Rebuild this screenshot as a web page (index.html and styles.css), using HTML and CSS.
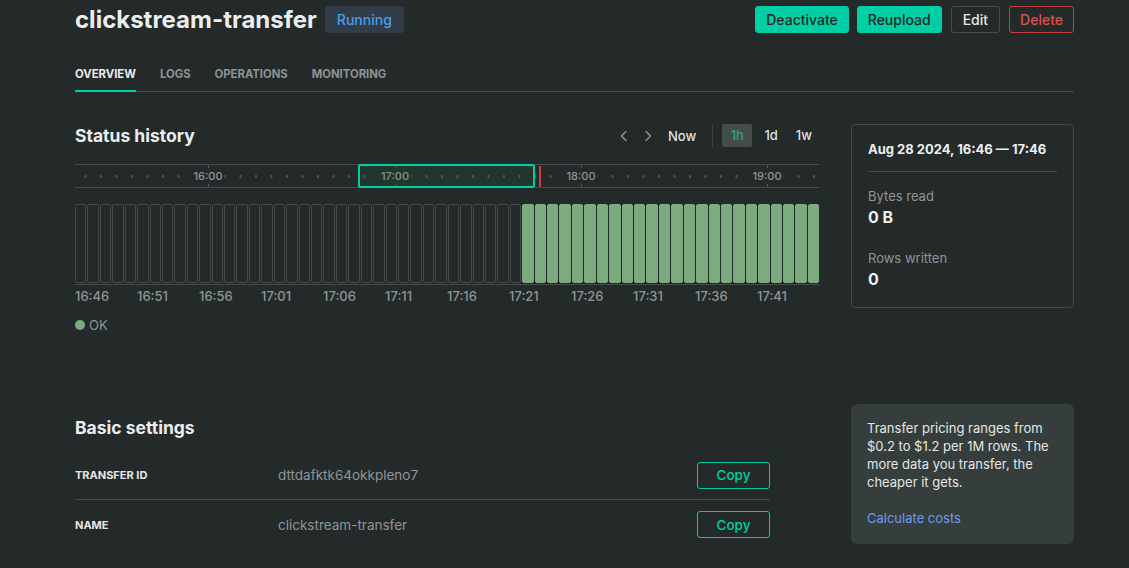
FILE: index.html
```html
<!DOCTYPE html>
<html lang="en">
<head>
<meta charset="utf-8">
<title>clickstream-transfer</title>
<link rel="stylesheet" href="styles.css">
</head>
<body>
<div class="page">
  <header class="header">
    <div class="title-wrap">
      <h1 class="title">clickstream-transfer</h1>
      <span class="badge">Running</span>
    </div>
    <div class="actions">
      <button class="btn btn-primary btn-deact">Deactivate</button>
      <button class="btn btn-primary btn-reup">Reupload</button>
      <button class="btn btn-outline">Edit</button>
      <button class="btn btn-danger">Delete</button>
    </div>
  </header>

  <nav class="tabs">
    <span class="tab active">Overview</span>
    <span class="tab">Logs</span>
    <span class="tab">Operations</span>
    <span class="tab">Monitoring</span>
  </nav>

  <section class="status">
    <div class="status-main">
      <div class="status-head">
        <h2 class="h2">Status history</h2>
        <div class="range-nav">
          <span class="chev"><svg width="10" height="12" viewBox="0 0 10 12"><path d="M7 1.5 L2.5 6 L7 10.5" fill="none" stroke="#8e9594" stroke-width="1.5" stroke-linecap="round" stroke-linejoin="round"/></svg></span>
          <span class="chev"><svg width="10" height="12" viewBox="0 0 10 12"><path d="M3 1.5 L7.5 6 L3 10.5" fill="none" stroke="#8e9594" stroke-width="1.5" stroke-linecap="round" stroke-linejoin="round"/></svg></span>
          <span class="now">Now</span>
          <span class="vsep"></span>
          <span class="rng active">1h</span>
          <span class="rng">1d</span>
          <span class="rng">1w</span>
        </div>
      </div>

      <div class="timeline">
        <span class="major" style="left:133px"></span>
        <span class="major" style="left:320px"></span>
        <span class="major" style="left:506px"></span>
        <span class="major" style="left:692px"></span>
        <span class="tl-label" style="left:133px">16:00</span>
        <span class="tl-label" style="left:320px">17:00</span>
        <span class="tl-label" style="left:506px">18:00</span>
        <span class="tl-label" style="left:692px">19:00</span>
        <span class="selection"></span>
        <span class="nowline"></span>
      </div>

      <div class="bars">
        <span class="bar"></span><span class="bar"></span><span class="bar"></span><span class="bar"></span><span class="bar"></span><span class="bar"></span>
        <span class="bar"></span><span class="bar"></span><span class="bar"></span><span class="bar"></span><span class="bar"></span><span class="bar"></span>
        <span class="bar"></span><span class="bar"></span><span class="bar"></span><span class="bar"></span><span class="bar"></span><span class="bar"></span>
        <span class="bar"></span><span class="bar"></span><span class="bar"></span><span class="bar"></span><span class="bar"></span><span class="bar"></span>
        <span class="bar"></span><span class="bar"></span><span class="bar"></span><span class="bar"></span><span class="bar"></span><span class="bar"></span>
        <span class="bar"></span><span class="bar"></span><span class="bar"></span><span class="bar"></span><span class="bar"></span><span class="bar"></span>
        <span class="bar ok"></span><span class="bar ok"></span><span class="bar ok"></span><span class="bar ok"></span><span class="bar ok"></span><span class="bar ok"></span>
        <span class="bar ok"></span><span class="bar ok"></span><span class="bar ok"></span><span class="bar ok"></span><span class="bar ok"></span><span class="bar ok"></span>
        <span class="bar ok"></span><span class="bar ok"></span><span class="bar ok"></span><span class="bar ok"></span><span class="bar ok"></span><span class="bar ok"></span>
        <span class="bar ok"></span><span class="bar ok"></span><span class="bar ok"></span><span class="bar ok"></span><span class="bar ok"></span><span class="bar ok"></span>
      </div>
      <div class="bar-labels">
        <span>16:46</span><span>16:51</span><span>16:56</span><span>17:01</span><span>17:06</span><span>17:11</span>
        <span>17:16</span><span>17:21</span><span>17:26</span><span>17:31</span><span>17:36</span><span>17:41</span>
      </div>
      <div class="legend"><span class="dot"></span>OK</div>
    </div>

    <aside class="stats">
      <div class="stats-date">Aug 28 2024, 16:46 — 17:46</div>
      <div class="stat">
        <div class="stat-label">Bytes read</div>
        <div class="stat-value">0 B</div>
      </div>
      <div class="stat">
        <div class="stat-label">Rows written</div>
        <div class="stat-value">0</div>
      </div>
    </aside>
  </section>

  <section class="settings">
    <div class="settings-main">
      <h2 class="h2">Basic settings</h2>
      <div class="rows">
        <div class="row">
          <span class="row-label">Transfer ID</span>
          <span class="row-value">dttdafktk64okkpleno7</span>
          <button class="btn-copy">Copy</button>
        </div>
        <div class="row">
          <span class="row-label">Name</span>
          <span class="row-value">clickstream-transfer</span>
          <button class="btn-copy">Copy</button>
        </div>
      </div>
    </div>
    <aside class="pricing">
      <p>Transfer pricing ranges from $0.2 to $1.2 per 1M rows. The more data you transfer, the cheaper it gets.</p>
      <a class="link">Calculate costs</a>
    </aside>
  </section>
</div>
</body>
</html>
```

FILE: styles.css
```css
* { box-sizing: border-box; }
html, body { margin: 0; padding: 0; }
body {
  background: #242a2a;
  color: #e6e8e8;
  font-family: Inter, "Noto Sans", "DejaVu Sans", sans-serif;
  font-size: 13px;
  height: 568px;
  overflow: hidden;
}
.page {
  width: 999px;
  margin-left: 75px;
  padding-top: 6px;
}
.header {
  display: flex;
  justify-content: space-between;
  align-items: center;
  height: 27px;
}
.title-wrap { display: flex; align-items: center; gap: 8px; }
.title {
  margin: 0;
  font-size: 24px;
  font-weight: 700;
  line-height: 27px;
  color: #eceeee;
}
.badge {
  background: #313c48;
  color: #4a9cf0;
  font-size: 14px;
  font-weight: 500;
  height: 27px;
  line-height: 27px;
  padding: 0 12px;
  border-radius: 3px;
}
.actions { display: flex; gap: 8px; }
.btn {
  font-family: inherit;
  font-size: 14px;
  font-weight: 500;
  height: 27px;
  padding: 0 12px;
  border-radius: 3px;
  border: 1px solid transparent;
  cursor: pointer;
}
.btn-primary { background: #00cfa5; color: #1e2b27; border-color: #00cfa5; }
.btn-deact { padding: 0 10px; }
.btn-reup { padding: 0 10px; }
.btn-outline { background: transparent; color: #e6e8e8; border-color: #474e4d; padding: 0 11px; margin-left: 1px; }
.btn-danger { background: transparent; color: #d9514c; border-color: #c9413e; padding: 0 10px; margin-left: 1px; }

.tabs {
  display: flex;
  gap: 24px;
  margin-top: 31px;
  border-bottom: 1px solid #434a49;
}
.tab {
  text-transform: uppercase;
  font-size: 11.3px;
  font-weight: 700;
  color: #8d9392;
  line-height: 20px;
  padding-bottom: 6px;
  margin-bottom: -1px;
  border-bottom: 2px solid transparent;
}
.tab.active { color: #e9ebeb; border-bottom-color: #00cfa5; }

.status {
  display: flex;
  justify-content: space-between;
  margin-top: 32px;
}
.status-main { width: 744px; }
.status-head {
  display: flex;
  justify-content: space-between;
  align-items: center;
  height: 23px;
}
.h2 {
  margin: 0;
  font-size: 17.5px;
  font-weight: 700;
  color: #eceeee;
}
.range-nav { display: flex; align-items: center; height: 23px; }
.chev { width: 12px; display: flex; justify-content: center; margin-right: 12px; }
.chev + .chev { margin-right: 14px; }
.now { color: #dfe2e1; font-size: 13px; font-weight: 500; }
.vsep { width: 1px; height: 24px; background: #3c4443; margin: 0 9px 0 16px; }
.rng {
  font-size: 13px;
  font-weight: 500;
  color: #dfe2e1;
  height: 23px;
  line-height: 23px;
  margin-right: 18px;
}
.rng:last-child { margin-right: 7px; }
.rng.active {
  background: #434d4b;
  color: #37a07d;
  border-radius: 2px;
  padding: 0 8.5px;
  margin-right: 12px;
}

.timeline {
  position: relative;
  margin-top: 17px;
  height: 24px;
  border-top: 1px solid #454c4b;
  border-bottom: 1px solid #454c4b;
  background-image: linear-gradient(to right, #4a5251 0 1.5px, transparent 1.5px);
  background-size: 15.5px 3px;
  background-position: 9.5px 10px;
  background-repeat: repeat-x;
}
.major {
  position: absolute;
  top: 0;
  bottom: 0;
  width: 1px;
  background: linear-gradient(#4f5756 0 4px, transparent 4px 18px, #4f5756 18px);
}
.tl-label {
  position: absolute;
  top: 3px;
  transform: translateX(-50%);
  background: #242a2a;
  padding: 0 2px;
  font-size: 11px;
  line-height: 16px;
  color: #8e9594;
  font-weight: 500;
}
.selection {
  position: absolute;
  left: 283px;
  width: 177px;
  top: -1px;
  bottom: -1px;
  border: 2px solid #00cfa5;
  border-radius: 2px;
  background: rgba(20, 160, 70, 0.12);
}
.nowline {
  position: absolute;
  left: 464px;
  width: 2px;
  top: 1px;
  bottom: 0;
  background: #c9413e;
}

.bars {
  display: flex;
  gap: 1px;
  height: 81px;
  margin-top: 16px;
  border-bottom: 1px solid #454c4b;
  padding-bottom: 1px;
}
.bar {
  flex: 1;
  border: 1px solid #444b4a;
  border-radius: 2px;
}
.bar.ok { background: #7dab80; border-color: #7dab80; }
.bar-labels {
  display: grid;
  grid-template-columns: repeat(12, 62px);
  margin-top: 2px;
  font-size: 13px;
  line-height: 18px;
  color: #8e9594;
  font-weight: 500;
}
.legend {
  display: flex;
  align-items: center;
  margin-top: 11px;
  color: #8e9594;
  font-size: 13px;
  line-height: 18px;
}
.dot {
  width: 10px;
  height: 10px;
  border-radius: 50%;
  background: #7dab80;
  margin-right: 4px;
}

.stats {
  width: 223px;
  height: 184px;
  border: 1px solid #424948;
  border-radius: 4px;
  padding: 15px 16px 0 16px;
}
.stats-date {
  font-size: 13px;
  font-weight: 700;
  color: #eceeee;
  line-height: 18px;
  padding-bottom: 13px;
  border-bottom: 1px solid #454c4b;
  margin-bottom: 15px;
}
.stat { margin-bottom: 21px; }
.stat-label { color: #8e9594; font-size: 13px; line-height: 18px; }
.stat-value { font-size: 16px; font-weight: 700; color: #eceeee; line-height: 22px; margin-top: 1px; }

.settings {
  display: flex;
  justify-content: space-between;
  margin-top: 70px;
}
.settings-main { width: 695px; padding-top: 13px; }
.rows { margin-top: 13px; }
.row {
  display: flex;
  align-items: center;
  height: 49px;
  border-bottom: 1px solid #434a49;
}
.row:last-child { border-bottom: none; }
.row-label {
  width: 203px;
  text-transform: uppercase;
  font-size: 11px;
  font-weight: 700;
  color: #e4e6e6;
}
.row-value { flex: 1; color: #8e9594; font-size: 13.5px; }
.btn-copy {
  width: 73px;
  height: 27px;
  background: transparent;
  border: 1px solid #00cfa5;
  border-radius: 3px;
  color: #00cfa5;
  font-family: inherit;
  font-size: 13.5px;
  font-weight: 500;
}
.pricing {
  width: 223px;
  height: 140px;
  background: #363e3d;
  border-radius: 6px;
  padding: 15px 16px;
}
.pricing p {
  margin: 0;
  font-size: 13px;
  line-height: 18px;
  color: #e3e6e5;
}
.link {
  display: block;
  margin-top: 18px;
  color: #6b9bf0;
  font-size: 13px;
  line-height: 18px;
}
```
